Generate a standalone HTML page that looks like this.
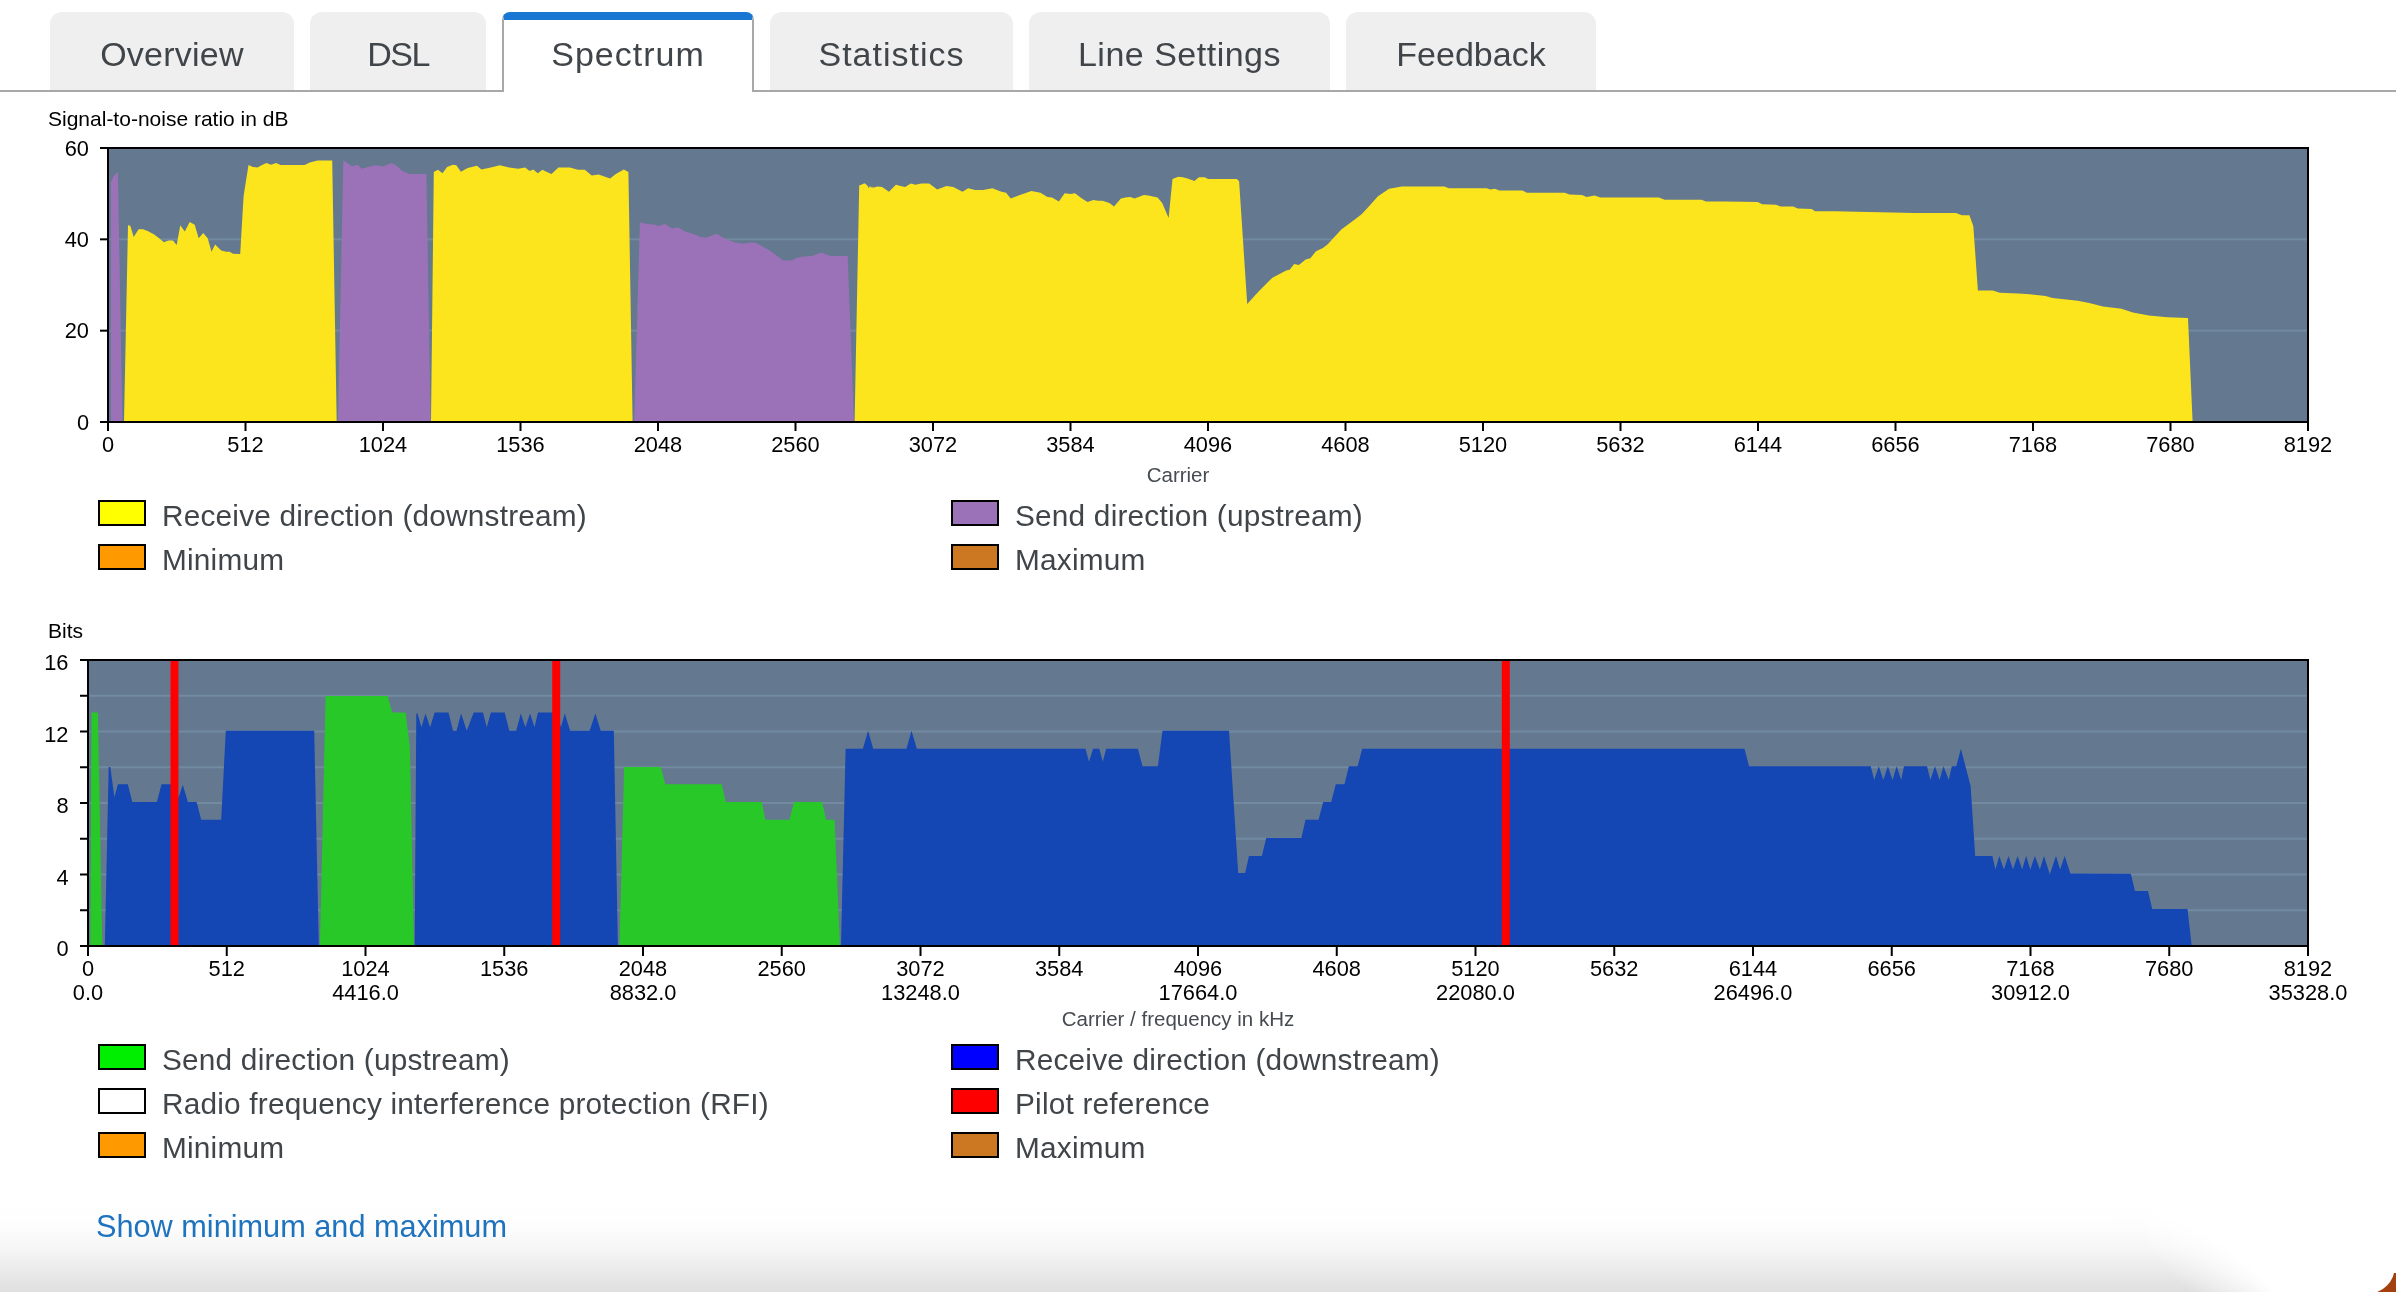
<!DOCTYPE html>
<html><head><meta charset="utf-8"><title>Spectrum</title>
<style>
html,body{margin:0;padding:0;}
body{width:2396px;height:1292px;overflow:hidden;position:relative;background:#fff;font-family:"Liberation Sans",sans-serif;}
.ltxt,.tab,.title,.link,svg{will-change:transform;}
.tab{position:absolute;top:12px;height:78px;background:#efefef;border-radius:12px 12px 0 0;color:#40454a;font-size:34px;line-height:85px;text-align:center;}
.tab.active{background:#fff;top:12px;height:80px;box-sizing:border-box;border-top:8px solid #1976d2;border-left:2px solid #a8a8a8;border-right:2px solid #a8a8a8;border-radius:8px 8px 0 0;line-height:69px;z-index:2;}
.tabline{position:absolute;left:0;top:90px;width:2396px;height:2px;background:#a8a8a8;}
.title{position:absolute;left:48px;font-size:21px;line-height:21px;color:#000;}
.lbox{position:absolute;width:44px;height:22px;border:2px solid #000;}
.ltxt{position:absolute;font-size:29.8px;line-height:29.8px;letter-spacing:0.2px;color:#40454a;white-space:nowrap;}
.link{position:absolute;left:95.5px;font-size:30.7px;line-height:30.7px;color:#1e73be;white-space:nowrap;}
svg{position:absolute;left:0;top:0;}
.ax{font-family:"Liberation Sans",sans-serif;font-size:21.8px;fill:#000;}
.axt{font-family:"Liberation Sans",sans-serif;font-size:20.5px;fill:#464b51;}
.shadow{position:absolute;left:0;top:1200px;width:2396px;height:92px;background:linear-gradient(to bottom,rgba(0,0,0,0) 0px,rgba(0,0,0,0.008) 25px,rgba(0,0,0,0.035) 48px,rgba(0,0,0,0.085) 73px,rgba(0,0,0,0.125) 92px);}
.fade{position:absolute;left:0;top:1200px;width:2396px;height:92px;background:radial-gradient(299px 338px at 2396px -100px,#fff 67%,rgba(255,255,255,0) 100%);}
.corner{position:absolute;left:2366px;top:1273px;width:30px;height:19px;background:#a3400f;}
.cornerw{position:absolute;left:2336px;top:1234px;width:59px;height:60px;background:#fff;border-radius:0 0 28px 0;}
</style></head><body>
<div class="shadow"></div>
<div class="tabline"></div>
<div class="tab" style="left:50px;width:244px;letter-spacing:0.25px">Overview</div>
<div class="tab" style="left:310px;width:176px;letter-spacing:-1.5px">DSL</div>
<div class="tab active" style="left:502px;width:252px;letter-spacing:1px">Spectrum</div>
<div class="tab" style="left:770px;width:243px;letter-spacing:1px">Statistics</div>
<div class="tab" style="left:1029px;width:301px;letter-spacing:0.5px">Line Settings</div>
<div class="tab" style="left:1346px;width:250px;letter-spacing:0px">Feedback</div>
<div class="title" style="top:108.224px">Signal-to-noise ratio in dB</div>
<div class="title" style="top:620.223px">Bits</div>

<svg width="2396" height="1292" viewBox="0 0 2396 1292">
<defs><linearGradient id="fd" gradientUnits="userSpaceOnUse" x1="2140" y1="1245" x2="2185" y2="1200"><stop offset="0" stop-color="#fff" stop-opacity="0"/><stop offset="1" stop-color="#fff" stop-opacity="1"/></linearGradient></defs>
<rect x="1800" y="1195" width="596" height="97" fill="url(#fd)"/>
<rect x="108" y="148" width="2200" height="274" fill="#647890"/>
<rect x="108" y="329.667" width="2200" height="2" fill="#7289a2"/>
<rect x="108" y="238.333" width="2200" height="2" fill="#7289a2"/>
<polygon fill="#9b72b8" points="110.8,422 110.8,182.6 113.5,176.3 117.9,172.1 122.4,422"/>
<polygon fill="#fce51c" points="124,422 128,225.3 130.3,225.7 133.7,236.9 138.6,229.3 143.1,229.3 147.6,231.1 153.8,234.2 158.8,238 163.9,242.3 168.4,240.5 172.9,240.5 176.7,245 180.3,225.3 184.8,231.5 189.7,222.1 194.7,224.8 198.7,238.3 203.2,233.1 207.7,238.3 211.5,251.7 215.1,244.6 221.2,250.4 226.3,251.7 229.7,251.7 233,253.8 240.2,254 243.6,196.1 248.5,165.1 253,166.9 257.5,167.4 262,165.1 266.5,162.9 271,164.7 276.1,162.9 280.6,165.1 304.6,165.1 309.8,162.4 317.6,160.6 332.2,160.6 336.7,422"/>
<polygon fill="#9b72b8" points="338,422 343.3,160.2 347.2,163 351.8,166.4 357.5,164.8 362.1,168.7 367.9,167.1 375.9,165.3 382.8,166.4 391.5,163 396.6,165.7 402.3,171 409.2,174 426.4,174 430.6,422"/>
<polygon fill="#fce51c" points="431,422 433.8,172.1 437.9,169.8 442.5,173.3 447.1,167.1 452.8,164.8 456.3,165.3 460.9,171.7 467.7,168 476.9,165.7 481.5,169.4 490.7,167.5 499.9,165.3 509.1,167.5 518.2,168.7 525.1,167.5 529.7,171 533.2,169.4 537.8,173.3 542.4,169.8 546.9,172.1 551.5,174 558.4,167.5 569.9,167.5 577.9,169.8 584.8,169.8 591.7,175.6 598.6,174.4 610.1,178.6 615.8,174 623.8,169.4 628.4,172.1 632.6,422"/>
<polygon fill="#9b72b8" points="634.2,422 639.9,222.2 645.7,223.8 653.7,224.5 658.3,226.1 665.2,224 672.1,228.4 677.8,227.2 685.8,231.8 692.7,233.7 701.9,237.6 706.5,237.6 716.8,233.7 722.6,237.6 734,242.2 743.2,243.8 750.1,242.4 755.8,242.8 761.6,246.1 768.5,249.7 783.4,260.5 791.4,260.5 796,258.2 802.9,256.6 812.1,255.9 821.3,252.5 830.5,255.9 847.7,255.9 853.9,422"/>
<polygon fill="#fce51c" points="854.6,422 859.2,185.5 864.9,183.2 869.5,187.8 874.1,187.1 859.2,185.9 863.8,183.6 868.4,187.8 873,187.8 877.5,186.4 882.1,187.1 889,191.7 895.9,184.8 900.5,185.9 905.1,187.1 910.8,183.6 915.4,184.8 921.2,183.6 929.2,183.6 937.2,189.4 946.4,185.9 953.3,187.1 962.5,191.7 968.2,188.2 975.1,190 983.1,190 992.3,188.2 1001.5,191.7 1006.1,192.8 1010.7,198.5 1019.9,195.1 1031.4,191 1040.5,192.8 1047.4,196.9 1052,197.4 1058.9,201.5 1064.6,193.3 1070.4,193.9 1075,193.3 1081.9,198.5 1087.6,202 1093.3,200.1 1097.9,200.8 1102.5,200.8 1109.4,203.1 1114,206.6 1120.9,198.5 1125.5,197.4 1130.1,196.9 1134.7,198.5 1143.8,195.1 1148.4,195.6 1157.6,197.4 1162.2,203.1 1168.6,218.1 1172.5,179 1178.3,176.7 1182.9,177.2 1187.5,178.6 1194.4,180.9 1198.9,177.2 1204.7,177.2 1208.1,179 1236.8,179 1239.1,181.3 1247.2,304.1 1258.6,291.5 1272.4,277.7 1286.2,270.4 1289.6,269.7 1294.2,264 1298.8,265.1 1305.7,259.4 1310.3,258.2 1316,251.3 1322.9,247.9 1327.5,244.5 1341.3,229.5 1355.1,219.2 1361.9,213.9 1368.8,206.6 1378,196.2 1387.2,190 1380,194.6 1389.2,188.7 1401.8,186.4 1444.3,186.4 1448.9,188.2 1486.7,188.2 1490.2,189.4 1494.8,188.7 1499.4,190.5 1522.3,190.5 1526.9,192.8 1564.8,192.8 1569.4,194.6 1582,195.1 1586.6,196.9 1594.6,195.6 1600.4,197.4 1658.9,197.4 1664.7,199.7 1701.4,199.7 1706,201.5 1724.4,201.5 1757.6,202 1762.2,204.3 1776,204.7 1780.6,206.6 1793.2,206.6 1797.8,208.4 1811.6,208.9 1815,211.2 1836.8,211.2 1834.4,211.2 1914.8,213 1956.1,213 1961.8,215.3 1969.4,215.3 1973.3,226.1 1977.9,290.4 1992.8,290.4 1999.7,292.7 2018.1,293.4 2029.6,294.3 2045.6,296.1 2052.5,297.9 2061.7,298.9 2077.8,300.7 2089.3,303 2103,306.4 2121.4,308.7 2132.9,312.6 2148.9,315.6 2167.3,317.2 2188,317.9 2192.6,422"/>
<rect x="107" y="147" width="2202" height="2" fill="#000"/>
<rect x="107" y="421" width="2202" height="2" fill="#000"/>
<rect x="107" y="147" width="2" height="276" fill="#000"/>
<rect x="2307" y="147" width="2" height="276" fill="#000"/>
<rect x="100" y="421" width="8" height="2" fill="#000"/>
<text x="89" y="429.8" text-anchor="end" class="ax">0</text>
<rect x="100" y="329.667" width="8" height="2" fill="#000"/>
<text x="89" y="338.467" text-anchor="end" class="ax">20</text>
<rect x="100" y="238.333" width="8" height="2" fill="#000"/>
<text x="89" y="247.133" text-anchor="end" class="ax">40</text>
<rect x="100" y="147" width="8" height="2" fill="#000"/>
<text x="89" y="155.8" text-anchor="end" class="ax">60</text>
<rect x="107" y="422" width="2" height="9" fill="#000"/>
<text x="108" y="451.5" text-anchor="middle" class="ax">0</text>
<rect x="244.5" y="422" width="2" height="9" fill="#000"/>
<text x="245.5" y="451.5" text-anchor="middle" class="ax">512</text>
<rect x="382" y="422" width="2" height="9" fill="#000"/>
<text x="383" y="451.5" text-anchor="middle" class="ax">1024</text>
<rect x="519.5" y="422" width="2" height="9" fill="#000"/>
<text x="520.5" y="451.5" text-anchor="middle" class="ax">1536</text>
<rect x="657" y="422" width="2" height="9" fill="#000"/>
<text x="658" y="451.5" text-anchor="middle" class="ax">2048</text>
<rect x="794.5" y="422" width="2" height="9" fill="#000"/>
<text x="795.5" y="451.5" text-anchor="middle" class="ax">2560</text>
<rect x="932" y="422" width="2" height="9" fill="#000"/>
<text x="933" y="451.5" text-anchor="middle" class="ax">3072</text>
<rect x="1069.5" y="422" width="2" height="9" fill="#000"/>
<text x="1070.5" y="451.5" text-anchor="middle" class="ax">3584</text>
<rect x="1207" y="422" width="2" height="9" fill="#000"/>
<text x="1208" y="451.5" text-anchor="middle" class="ax">4096</text>
<rect x="1344.5" y="422" width="2" height="9" fill="#000"/>
<text x="1345.5" y="451.5" text-anchor="middle" class="ax">4608</text>
<rect x="1482" y="422" width="2" height="9" fill="#000"/>
<text x="1483" y="451.5" text-anchor="middle" class="ax">5120</text>
<rect x="1619.5" y="422" width="2" height="9" fill="#000"/>
<text x="1620.5" y="451.5" text-anchor="middle" class="ax">5632</text>
<rect x="1757" y="422" width="2" height="9" fill="#000"/>
<text x="1758" y="451.5" text-anchor="middle" class="ax">6144</text>
<rect x="1894.5" y="422" width="2" height="9" fill="#000"/>
<text x="1895.5" y="451.5" text-anchor="middle" class="ax">6656</text>
<rect x="2032" y="422" width="2" height="9" fill="#000"/>
<text x="2033" y="451.5" text-anchor="middle" class="ax">7168</text>
<rect x="2169.5" y="422" width="2" height="9" fill="#000"/>
<text x="2170.5" y="451.5" text-anchor="middle" class="ax">7680</text>
<rect x="2307" y="422" width="2" height="9" fill="#000"/>
<text x="2308" y="451.5" text-anchor="middle" class="ax">8192</text>
<rect x="88" y="660" width="2220" height="286" fill="#647890"/>
<rect x="88" y="909.25" width="2220" height="2" fill="#7289a2"/>
<rect x="88" y="873.5" width="2220" height="2" fill="#7289a2"/>
<rect x="88" y="837.75" width="2220" height="2" fill="#7289a2"/>
<rect x="88" y="802" width="2220" height="2" fill="#7289a2"/>
<rect x="88" y="766.25" width="2220" height="2" fill="#7289a2"/>
<rect x="88" y="730.5" width="2220" height="2" fill="#7289a2"/>
<rect x="88" y="694.75" width="2220" height="2" fill="#7289a2"/>
<polygon fill="#28c828" points="90.3,946 91.5,712.4 97.9,712.4 102.3,946"/>
<polygon fill="#1446b4" points="104.8,946 108.7,767 110.3,767 114.4,797.3 117.9,784.2 127.8,784.2 132.3,801.9 156.9,801.9 161.5,784.2 171.8,784.2 178.7,797.3 182.8,784.7 187.9,801.9 196.6,801.9 201.2,819.8 221.2,819.8 225.8,730.8 314.2,730.8 318.8,946"/>
<polygon fill="#28c828" points="319.9,946 325.6,695.9 387.6,695.9 392.2,712.4 405.5,712.4 409.9,746.8 414,946"/>
<polygon fill="#1446b4" points="414.7,946 416.3,713.5 417.5,713.5 421.4,727.3 425.5,713.5 430.1,727.3 434.7,712.4 448.5,712.4 453,730.8 456.5,730.8 461.1,713.5 466.8,730.8 473.7,712.4 482.9,712.4 486.8,727.3 490.9,712.4 504.7,712.4 509.3,730.8 516.2,730.8 520.8,713.5 525.4,727.3 530,713.5 534.5,727.3 538,712.4 557.5,712.4 560.9,727.3 564.8,713.5 570.1,730.8 589.6,730.8 595.4,713.5 600.7,730.8 613.1,730.8 613.8,730.8 617.9,946"/>
<polygon fill="#28c828" points="619.5,946 624.1,767 660.8,767 665.4,784.2 721.7,784.2 725.8,801.9 761.8,801.9 765.3,819.8 789.4,819.8 794,801.9 822.2,801.9 826.1,819.8 834.6,819.8 839.9,946"/>
<polygon fill="#1446b4" points="841,946 845.6,748.7 862.9,748.7 868.1,730.8 873.2,748.7 906.5,748.7 911.5,730.8 916.8,748.7 1085.5,748.7 1089,761.7 1093.1,748.7 1099.3,748.7 1102.8,761.7 1106.2,748.7 1137.9,748.7 1142.5,766.3 1157.9,766.3 1162.5,730.8 1229,730.8 1238.2,873.1 1245.1,873.1 1249,855.9 1261.9,855.9 1266.2,838 1301.4,838 1305.5,819.8 1318.6,819.8 1323.2,801.9 1331.2,801.9 1335.8,784.2 1344.5,784.2 1348.9,766.3 1357.6,766.3 1362.2,748.7 1744.5,748.7 1749,766.3 1870.7,766.3 1874.2,780.1 1878.8,766.3 1883.3,780.1 1887.9,766.3 1892.5,780.1 1896.7,766.3 1901.2,780.1 1904,766.3 1927,766.3 1930.4,780.1 1935,766.3 1939.6,780.1 1943.5,766.3 1948.8,780.1 1951.8,766.3 1956.3,766.3 1960.9,748.7 1970.6,785.9 1975.2,855.9 1992.4,855.9 1995.4,869.6 1999.3,855.9 2003.9,869.6 2008.5,855.9 2013,869.6 2017.6,855.9 2022.2,869.6 2026.1,855.9 2030.3,869.6 2034.9,855.9 2039.9,869.6 2044,855.9 2049.8,874.2 2056,855.9 2060.1,869.6 2064.7,855.9 2070.4,873.5 2130.8,873.7 2135,891.1 2148,891.1 2152.2,909.1 2187.5,909.1 2191.7,946"/>
<rect x="170.5" y="660" width="8" height="286" fill="#ff0000"/>
<rect x="552.2" y="660" width="8" height="286" fill="#ff0000"/>
<rect x="1501.8" y="660" width="8" height="286" fill="#ff0000"/>
<rect x="87" y="659" width="2222" height="2" fill="#000"/>
<rect x="87" y="945" width="2222" height="2" fill="#000"/>
<rect x="87" y="659" width="2" height="288" fill="#000"/>
<rect x="2307" y="659" width="2" height="288" fill="#000"/>
<rect x="80" y="945" width="8" height="2" fill="#000"/>
<text x="68.5" y="956.2" text-anchor="end" class="ax">0</text>
<rect x="80" y="909.25" width="8" height="2" fill="#000"/>
<rect x="80" y="873.5" width="8" height="2" fill="#000"/>
<text x="68.5" y="884.7" text-anchor="end" class="ax">4</text>
<rect x="80" y="837.75" width="8" height="2" fill="#000"/>
<rect x="80" y="802" width="8" height="2" fill="#000"/>
<text x="68.5" y="813.2" text-anchor="end" class="ax">8</text>
<rect x="80" y="766.25" width="8" height="2" fill="#000"/>
<rect x="80" y="730.5" width="8" height="2" fill="#000"/>
<text x="68.5" y="741.7" text-anchor="end" class="ax">12</text>
<rect x="80" y="694.75" width="8" height="2" fill="#000"/>
<rect x="80" y="659" width="8" height="2" fill="#000"/>
<text x="68.5" y="670.2" text-anchor="end" class="ax">16</text>
<rect x="87" y="946" width="2" height="10" fill="#000"/>
<text x="88" y="975.5" text-anchor="middle" class="ax">0</text>
<text x="88" y="1000" text-anchor="middle" class="ax">0.0</text>
<rect x="225.75" y="946" width="2" height="10" fill="#000"/>
<text x="226.75" y="975.5" text-anchor="middle" class="ax">512</text>
<rect x="364.5" y="946" width="2" height="10" fill="#000"/>
<text x="365.5" y="975.5" text-anchor="middle" class="ax">1024</text>
<text x="365.5" y="1000" text-anchor="middle" class="ax">4416.0</text>
<rect x="503.25" y="946" width="2" height="10" fill="#000"/>
<text x="504.25" y="975.5" text-anchor="middle" class="ax">1536</text>
<rect x="642" y="946" width="2" height="10" fill="#000"/>
<text x="643" y="975.5" text-anchor="middle" class="ax">2048</text>
<text x="643" y="1000" text-anchor="middle" class="ax">8832.0</text>
<rect x="780.75" y="946" width="2" height="10" fill="#000"/>
<text x="781.75" y="975.5" text-anchor="middle" class="ax">2560</text>
<rect x="919.5" y="946" width="2" height="10" fill="#000"/>
<text x="920.5" y="975.5" text-anchor="middle" class="ax">3072</text>
<text x="920.5" y="1000" text-anchor="middle" class="ax">13248.0</text>
<rect x="1058.25" y="946" width="2" height="10" fill="#000"/>
<text x="1059.25" y="975.5" text-anchor="middle" class="ax">3584</text>
<rect x="1197" y="946" width="2" height="10" fill="#000"/>
<text x="1198" y="975.5" text-anchor="middle" class="ax">4096</text>
<text x="1198" y="1000" text-anchor="middle" class="ax">17664.0</text>
<rect x="1335.75" y="946" width="2" height="10" fill="#000"/>
<text x="1336.75" y="975.5" text-anchor="middle" class="ax">4608</text>
<rect x="1474.5" y="946" width="2" height="10" fill="#000"/>
<text x="1475.5" y="975.5" text-anchor="middle" class="ax">5120</text>
<text x="1475.5" y="1000" text-anchor="middle" class="ax">22080.0</text>
<rect x="1613.25" y="946" width="2" height="10" fill="#000"/>
<text x="1614.25" y="975.5" text-anchor="middle" class="ax">5632</text>
<rect x="1752" y="946" width="2" height="10" fill="#000"/>
<text x="1753" y="975.5" text-anchor="middle" class="ax">6144</text>
<text x="1753" y="1000" text-anchor="middle" class="ax">26496.0</text>
<rect x="1890.75" y="946" width="2" height="10" fill="#000"/>
<text x="1891.75" y="975.5" text-anchor="middle" class="ax">6656</text>
<rect x="2029.5" y="946" width="2" height="10" fill="#000"/>
<text x="2030.5" y="975.5" text-anchor="middle" class="ax">7168</text>
<text x="2030.5" y="1000" text-anchor="middle" class="ax">30912.0</text>
<rect x="2168.25" y="946" width="2" height="10" fill="#000"/>
<text x="2169.25" y="975.5" text-anchor="middle" class="ax">7680</text>
<rect x="2307" y="946" width="2" height="10" fill="#000"/>
<text x="2308" y="975.5" text-anchor="middle" class="ax">8192</text>
<text x="2308" y="1000" text-anchor="middle" class="ax">35328.0</text>
<text x="1178" y="481.5" text-anchor="middle" class="axt">Carrier</text>
<text x="1178" y="1025.5" text-anchor="middle" class="axt">Carrier / frequency in kHz</text>
</svg>
<div class="lbox" style="left:98px;top:500px;background:#ffff00"></div>
<div class="ltxt" style="left:162px;top:501.274px">Receive direction (downstream)</div>
<div class="lbox" style="left:951px;top:500px;background:#9b72b8"></div>
<div class="ltxt" style="left:1015px;top:501.274px">Send direction (upstream)</div>
<div class="lbox" style="left:98px;top:544px;background:#ff9900"></div>
<div class="ltxt" style="left:162px;top:545.274px">Minimum</div>
<div class="lbox" style="left:951px;top:544px;background:#cc7722"></div>
<div class="ltxt" style="left:1015px;top:545.274px">Maximum</div>
<div class="lbox" style="left:98px;top:1044px;background:#00ee00"></div>
<div class="ltxt" style="left:162px;top:1045.27px">Send direction (upstream)</div>
<div class="lbox" style="left:951px;top:1044px;background:#0000ff"></div>
<div class="ltxt" style="left:1015px;top:1045.27px">Receive direction (downstream)</div>
<div class="lbox" style="left:98px;top:1088px;background:#ffffff"></div>
<div class="ltxt" style="left:162px;top:1089.27px">Radio frequency interference protection (RFI)</div>
<div class="lbox" style="left:951px;top:1088px;background:#ff0000"></div>
<div class="ltxt" style="left:1015px;top:1089.27px">Pilot reference</div>
<div class="lbox" style="left:98px;top:1132px;background:#ff9900"></div>
<div class="ltxt" style="left:162px;top:1133.27px">Minimum</div>
<div class="lbox" style="left:951px;top:1132px;background:#cc7722"></div>
<div class="ltxt" style="left:1015px;top:1133.27px">Maximum</div>
<div class="corner"></div>
<div class="cornerw"></div>
<div class="link" style="top:1212.01px">Show minimum and maximum</div>
</body></html>
